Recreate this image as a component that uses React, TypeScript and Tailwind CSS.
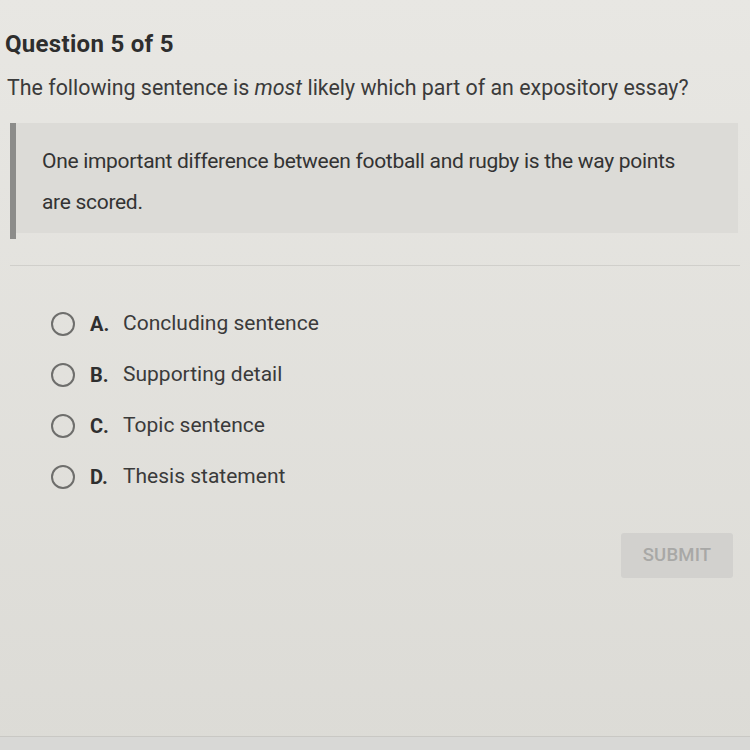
import React from "react";

const options = [
    { letter: "A", text: "Concluding sentence" },
    { letter: "B", text: "Supporting detail" },
    { letter: "C", text: "Topic sentence" },
    { letter: "D", text: "Thesis statement" },
];

export default function App() {
    return (
        <div
            className="w-[750px] h-[750px] overflow-hidden bg-gradient-to-b from-[#e8e7e3] to-[#dcdbd6] flex flex-col"
            style={{ fontFamily: "Roboto, 'Liberation Sans', sans-serif" }}
        >
            <div className="pl-[5px] pt-[28px]">
                <h1 className="text-[24px] leading-[32px] font-bold text-[#2e2e2e] tracking-[0.3px]">Question 5 of 5</h1>
                <p className="mt-[14px] pl-[2px] text-[21.4px] leading-[28px] text-[#3b3b3b]">
                    The following sentence is <em>most</em> likely which part of an expository essay?
                </p>
            </div>

            <div className="mt-[21px] ml-[10px] mr-[12px] flex">
                <div className="w-[6px] bg-[#8c8c8a] h-[116px]" />
                <div className="flex-1 h-[110px] bg-[#dcdbd7] pl-[26px] pt-[18px] text-[21px] leading-[41px] text-[#333] tracking-[-0.3px]">
                    <p>One important difference between football and rugby is the way points</p>
                    <p>are scored.</p>
                </div>
            </div>

            <div className="mt-[26px] mx-[10px] h-px bg-[#d0cfcb]" />

            <div className="mt-[46px] pl-[51px] flex flex-col gap-[27px]">
                {options.map((o) => (
                    <label key={o.letter} className="flex items-center h-[24px]">
                        <span className="w-[24px] h-[24px] rounded-full border-[2px] border-[#6e6e6c]" />
                        <span className="ml-[15px] text-[20px] font-bold text-[#2f2f2f] w-[33px]">{o.letter}.</span>
                        <span className="text-[21px] text-[#3a3a3a]">{o.text}</span>
                    </label>
                ))}
            </div>

            <div className="mt-[44px] flex justify-end pr-[17px]">
                <button className="w-[112px] h-[45px] rounded-[3px] bg-[#d2d1ce] text-[#a8a8a6] text-[18.5px] font-medium tracking-[0.2px]">
                    SUBMIT
                </button>
            </div>

            <div className="flex-1" />
            <div className="h-[14px] border-t border-[#c9c8c4] bg-[#d8d8d6]" />
        </div>
    );
}
